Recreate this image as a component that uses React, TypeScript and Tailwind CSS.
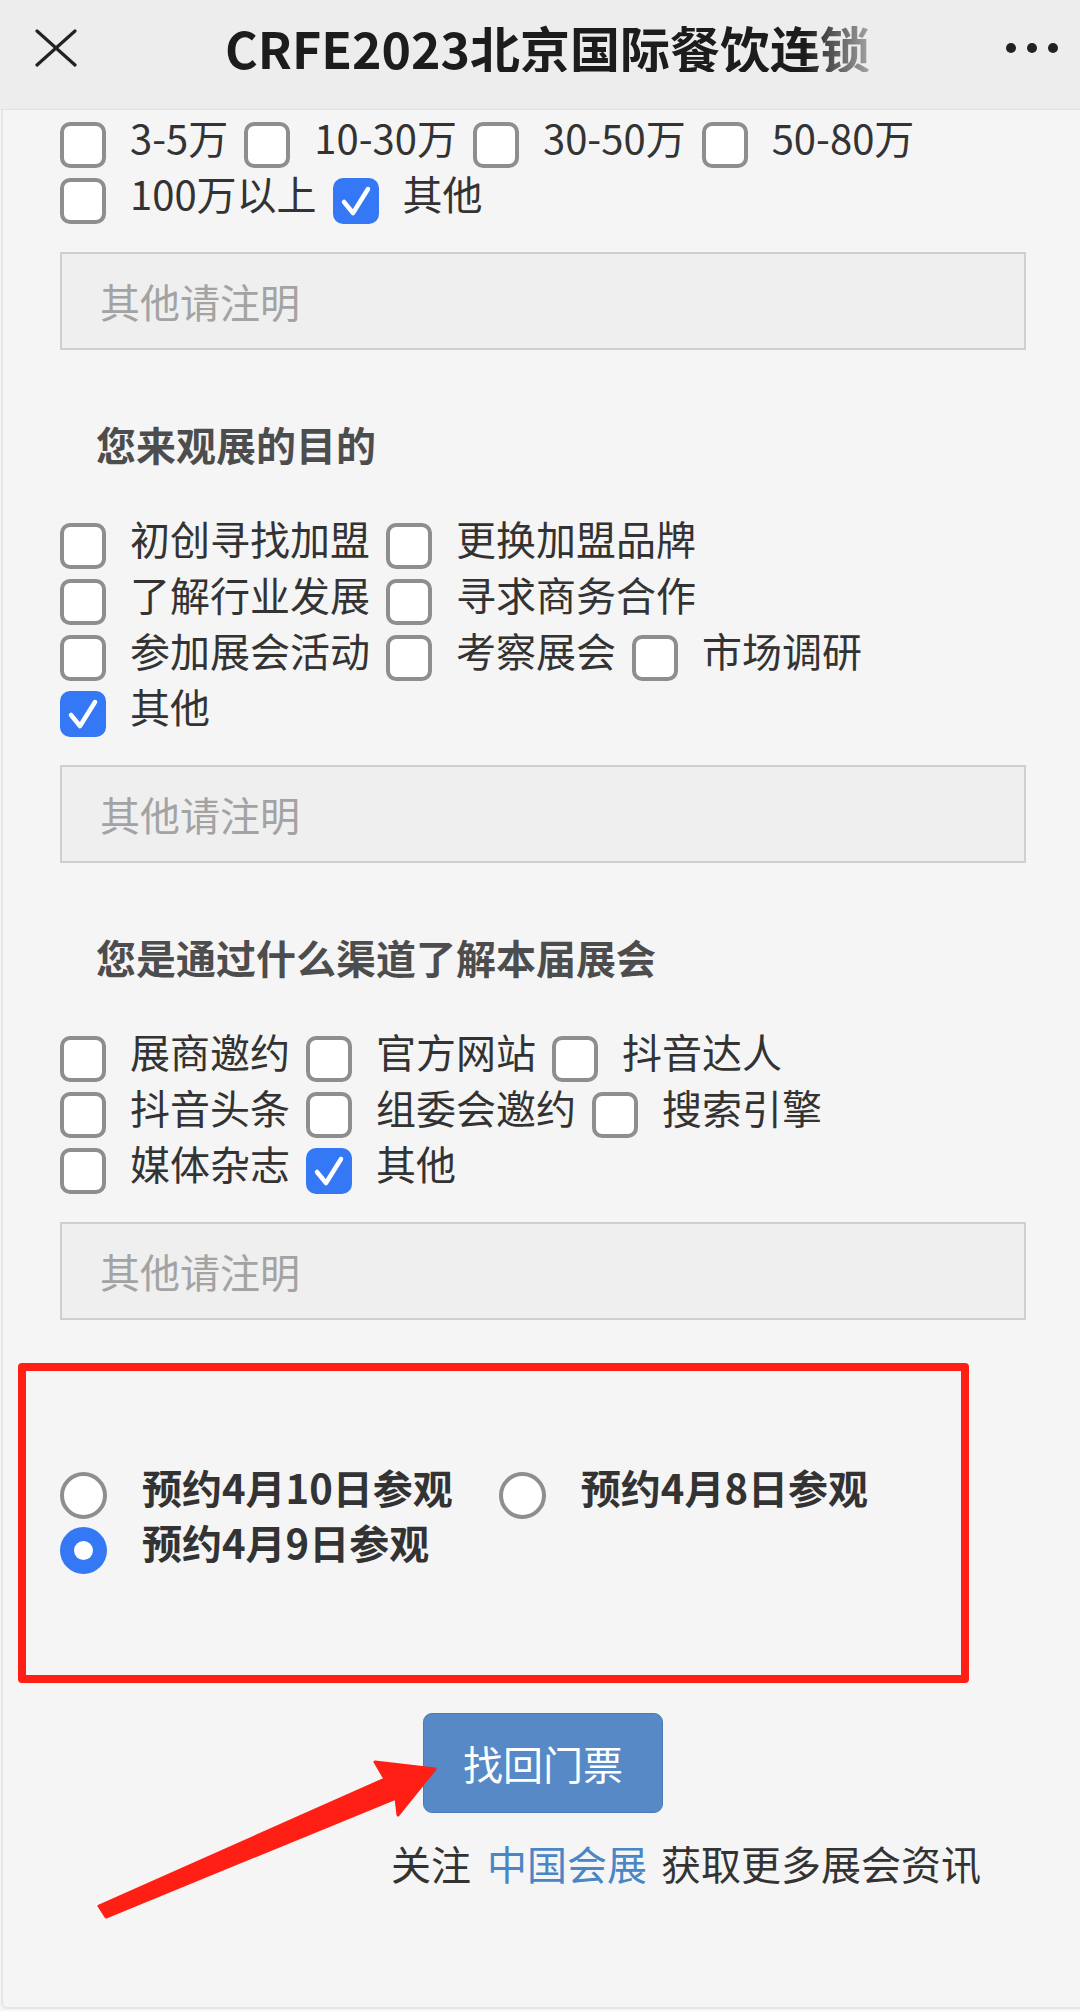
import { clsx } from 'clsx';

type Opt = { label: string; checked?: boolean };

const AMOUNT_ROWS: Opt[][] = [
  [{ label: '3-5万' }, { label: '10-30万' }, { label: '30-50万' }, { label: '50-80万' }],
  [{ label: '100万以上' }, { label: '其他', checked: true }],
];

const PURPOSE_ROWS: Opt[][] = [
  [{ label: '初创寻找加盟' }, { label: '更换加盟品牌' }],
  [{ label: '了解行业发展' }, { label: '寻求商务合作' }],
  [{ label: '参加展会活动' }, { label: '考察展会' }, { label: '市场调研' }],
  [{ label: '其他', checked: true }],
];

const CHANNEL_ROWS: Opt[][] = [
  [{ label: '展商邀约' }, { label: '官方网站' }, { label: '抖音达人' }],
  [{ label: '抖音头条' }, { label: '组委会邀约' }, { label: '搜索引擎' }],
  [{ label: '媒体杂志' }, { label: '其他', checked: true }],
];

function CheckBox({ checked }: { checked?: boolean }) {
  if (checked) {
    return (
      <span className="flex h-[46px] w-[46px] shrink-0 items-center justify-center rounded-[10px] bg-[#3478f6]">
        <svg viewBox="0 0 46 46" className="h-[46px] w-[46px]">
          <polyline
            points="11,24 20,35 35,11"
            fill="none"
            stroke="#fff"
            strokeWidth="4.5"
            strokeLinecap="round"
            strokeLinejoin="round"
          />
        </svg>
      </span>
    );
  }
  return <span className="block h-[46px] w-[46px] shrink-0 rounded-[10px] border-[4px] border-[#8e8e8e] bg-white" />;
}

function OptionRows({ rows }: { rows: Opt[][] }) {
  return (
    <div className="flex flex-col">
      {rows.map((row, i) => (
        <div key={i} className="flex h-[56px] items-center">
          {row.map((o, j) => (
            <div key={o.label} className={clsx('flex items-center', j > 0 && 'ml-[16px]')}>
              <CheckBox checked={o.checked} />
              <span className="relative -top-[8px] ml-[24px] text-[40px] leading-none text-[#333]">{o.label}</span>
            </div>
          ))}
        </div>
      ))}
    </div>
  );
}

function OtherInput() {
  return (
    <input
      readOnly
      placeholder="其他请注明"
      className="mt-[23px] block h-[98px] w-full border-2 border-[#cfcfcf] bg-[#efefef] pl-[38px] text-[40px] text-[#333] outline-none placeholder:text-[#a3a3a3]"
    />
  );
}

function Section({ title, rows }: { title: string; rows: Opt[][] }) {
  return (
    <section>
      <h3 className="mt-[66px] flex h-[56px] items-center pl-[36px] text-[40px] font-bold text-[#4d4d4d]">{title}</h3>
      <div className="mt-[46px]">
        <OptionRows rows={rows} />
      </div>
      <OtherInput />
    </section>
  );
}

function Radio({ checked }: { checked?: boolean }) {
  if (checked) {
    return (
      <span className="flex h-[47px] w-[47px] shrink-0 items-center justify-center rounded-full bg-[#3478f6]">
        <span className="h-[19px] w-[19px] rounded-full bg-white" />
      </span>
    );
  }
  return <span className="block h-[47px] w-[47px] shrink-0 rounded-full border-[4px] border-[#8e8e8e] bg-white" />;
}

function RadioLabel({ children }: { children: string }) {
  return <span className="relative -top-[9px] ml-[35px] text-[40px] font-bold leading-none text-[#333]">{children}</span>;
}

export default function App() {
  return (
    <div className="relative flex h-[2011px] w-[1080px] flex-col overflow-hidden bg-[#f5f5f5] font-['Noto_Sans_CJK_SC',sans-serif]">
      <header className="h-[110px] shrink-0 border-b border-[#e2e2e2] bg-[#ededed]">
        <div className="flex h-[96px] items-center">
          <div className="flex w-[225px] items-center pl-[35px]">
            <svg viewBox="0 0 42 38" className="h-[38px] w-[42px]">
              <path d="M2 2 L40 36 M40 2 L2 36" stroke="#222" strokeWidth="3.2" strokeLinecap="round" />
            </svg>
          </div>
          <div className="flex-1 whitespace-nowrap">
            <span className="inline-block text-[50px] font-semibold leading-none text-[#1c1c1c] [mask-image:linear-gradient(to_right,#000_90%,rgba(0,0,0,0.35))]">
              CRFE2023北京国际餐饮连锁
            </span>
          </div>
          <div className="flex items-center gap-[11px] pr-[22px]">
            <span className="h-[10px] w-[10px] rounded-full bg-[#222]" />
            <span className="h-[10px] w-[10px] rounded-full bg-[#222]" />
            <span className="h-[10px] w-[10px] rounded-full bg-[#222]" />
          </div>
        </div>
      </header>

      <main className="mb-[2px] ml-[1px] flex-1 rounded-bl-[6px] border-b-2 border-l-2 border-[#e6e6e6] pl-[57px] pr-[54px] pt-[7px]">
        <OptionRows rows={AMOUNT_ROWS} />
        <OtherInput />

        <Section title="您来观展的目的" rows={PURPOSE_ROWS} />
        <Section title="您是通过什么渠道了解本届展会" rows={CHANNEL_ROWS} />

        <div className="-ml-[42px] mt-[43px] w-[951px] rounded-[4px] border-[8px] border-[#ff1f14] py-[97px] pl-[34px]">
          <div className="flex h-[55px] items-center">
            <Radio />
            <RadioLabel>预约4月10日参观</RadioLabel>
            <div className="ml-[46px] flex">
              <Radio />
            </div>
            <RadioLabel>预约4月8日参观</RadioLabel>
          </div>
          <div className="flex h-[55px] items-center">
            <Radio checked />
            <RadioLabel>预约4月9日参观</RadioLabel>
          </div>
        </div>

        <button
          type="button"
          className="mx-auto mt-[30px] flex h-[100px] w-[240px] items-center justify-center rounded-[9px] border border-[#4a7bb7] bg-[#5689c6] text-[40px] text-white"
        >
          找回门票
        </button>

        <p className="mt-[22px] flex h-[56px] items-center justify-end pr-[45px] text-[40px] leading-none text-[#333]">
          <span>关注</span>
          <span className="ml-[16px] text-[#4a86c5]">中国会展</span>
          <span className="ml-[14px]">获取更多展会资讯</span>
        </p>
      </main>

      {/* red annotation arrow pointing at the button */}
      <svg className="pointer-events-none absolute left-0 top-0 h-[2011px] w-[1080px]" viewBox="0 0 1080 2011">
        <polygon
          points="99,1906 385,1779 375,1762 435,1769 398,1815 396,1798 106,1917"
          fill="#ff1f14"
          stroke="#ff1f14"
          strokeWidth="3"
          strokeLinejoin="round"
        />
      </svg>
    </div>
  );
}
